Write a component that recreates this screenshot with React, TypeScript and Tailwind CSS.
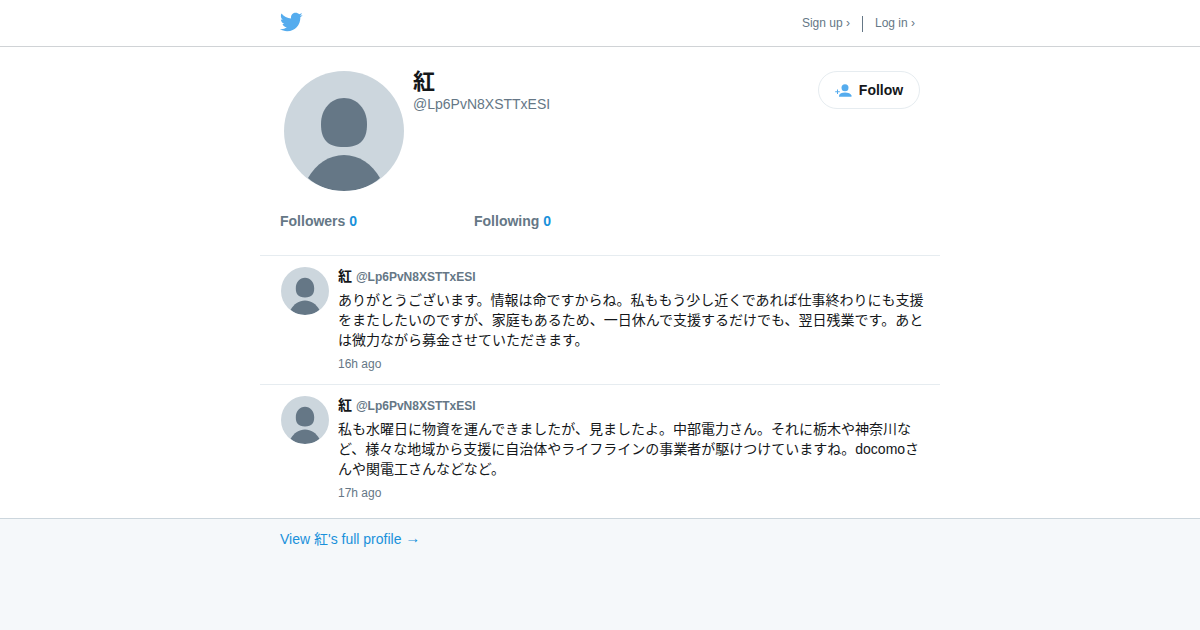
import React from "react";

const birdPath =
  "M23.643 4.937c-.835.37-1.732.62-2.675.733.962-.576 1.7-1.49 2.048-2.578-.9.534-1.897.922-2.958 1.13-.85-.904-2.06-1.47-3.4-1.47-2.572 0-4.658 2.086-4.658 4.66 0 .364.042.718.12 1.06-3.873-.195-7.304-2.05-9.602-4.868-.4.69-.63 1.49-.63 2.342 0 1.616.823 3.043 2.072 3.878-.764-.025-1.482-.234-2.11-.583v.06c0 2.257 1.605 4.14 3.737 4.568-.392.106-.803.162-1.227.162-.3 0-.593-.028-.877-.082.593 1.85 2.313 3.198 4.352 3.234-1.595 1.25-3.604 1.995-5.786 1.995-.376 0-.747-.022-1.112-.065 2.062 1.323 4.51 2.093 7.14 2.093 8.57 0 13.255-7.098 13.255-13.254 0-.2-.005-.402-.014-.602.91-.658 1.7-1.477 2.323-2.41z";

function Avatar({ className }: { className: string }) {
  return (
    <svg viewBox="0 0 120 120" className={className}>
      <clipPath id="avatar-clip">
        <circle cx="60" cy="60" r="60" />
      </clipPath>
      <g clipPath="url(#avatar-clip)">
        <rect width="120" height="120" fill="#ccd6dd" />
        <path
          d="M60 27c-13 0-23 11-23 26 0 8 1.500 13 5 17 3.500 4 9.500 6 18 6s14.500-2 18-6c3.500-4 5-9 5-17 0-15-10-26-23-26z"
          fill="#657786"
        />
        <path
          d="M24 107c8-14 21-23 36-23s28 9 36 23c-9 8.500-22 13-36 13s-27-4.500-36-13z"
          fill="#657786"
        />
      </g>
    </svg>
  );
}

const tweets = [
  {
    text: "ありがとうございます。情報は命ですからね。私ももう少し近くであれば仕事終わりにも支援をまたしたいのですが、家庭もあるため、一日休んで支援するだけでも、翌日残業です。あとは微力ながら募金させていただきます。",
    time: "16h ago",
  },
  {
    text: "私も水曜日に物資を運んできましたが、見ましたよ。中部電力さん。それに栃木や神奈川など、様々な地域から支援に自治体やライフラインの事業者が駆けつけていますね。docomoさんや関電工さんなどなど。",
    time: "17h ago",
  },
];

function App() {
  return (
    <div className="min-h-[630px] flex flex-col bg-white font-['Liberation_Sans','Noto_Sans_CJK_JP',sans-serif] text-[#14171a]">
      <header className="h-[47px] border-b border-[#d0d3d6]">
        <div className="w-[680px] mx-auto px-5 flex justify-between">
          <svg viewBox="0 0 24 24" className="w-6 h-6 mt-[10px] -ml-px fill-[#55acee]">
            <path d={birdPath} />
          </svg>
          <nav className="flex items-center h-[46px] pr-[5px] text-xs text-[#657786]">
            <span>Sign up ›</span>
            <span className="w-px h-4 bg-[#657786] mx-3 mt-[1px]"></span>
            <span>Log in ›</span>
          </nav>
        </div>
      </header>

      <main className="w-[680px] mx-auto">
        <section className="px-5 pt-6 h-[209px] border-b border-[#e6ecf0]">
          <div className="flex items-start">
            <Avatar className="w-[120px] h-[120px] ml-1 shrink-0" />
            <div className="ml-[9px] flex-1 -mt-[2px]">
              <h1 className="text-[22px] leading-[26px] font-bold">紅</h1>
              <p className="text-sm leading-[16px] mt-[1px] text-[#657786]">@Lp6PvN8XSTTxESI</p>
            </div>
            <button className="h-[38px] w-[102px] flex items-center justify-center gap-[7px] rounded-full border border-[#e6ecf0] text-sm font-bold">
              <svg viewBox="0 0 17 13" className="w-[17px] h-[13px] fill-[#55acee]">
                <circle cx="10" cy="3.800" r="3.500" />
                <path d="M4 11.500c.4-2 2.800-3 6-3s5.800 1 6.500 3v1.300H4z" />
                <path d="M2 5.500h1v1.800h1.800v1H3v1.800H2V8.300H.2v-1H2z" />
              </svg>
              Follow
            </button>
          </div>
          <div className="flex mt-[21px] text-sm leading-[18px] font-bold text-[#657786]">
            <span className="w-[194px]">
              Followers <span className="text-[#1a91da]">0</span>
            </span>
            <span>
              Following <span className="text-[#1a91da]">0</span>
            </span>
          </div>
        </section>

        {tweets.map((tweet, i) => (
          <article
            key={tweet.time}
            className={`flex pl-[21px] pr-[13px] pt-[11px] ${i === 0 ? "h-[129px] border-b border-[#e6ecf0]" : "h-[133px]"}`}
          >
            <Avatar className="w-12 h-12 shrink-0" />
            <div className="ml-[9px] min-w-0 -mt-px">
              <div className="text-sm leading-5 font-bold">
                紅 <span className="text-xs text-[#657786]">@Lp6PvN8XSTTxESI</span>
              </div>
              <p className="text-sm leading-5 mt-1">{tweet.text}</p>
              <div className="text-xs leading-4 mt-[6px] text-[#657786]">{tweet.time}</div>
            </div>
          </article>
        ))}
      </main>

      <footer className="flex-1 bg-[#f5f8fa] border-t border-[#ccd6dd]">
        <div className="w-[680px] mx-auto px-5 pt-[11px] text-sm leading-[18px] text-[#1a91da]">
          View 紅's full profile <span className="inline-block -translate-y-px text-[15px] leading-none">→</span>
        </div>
      </footer>
    </div>
  );
}

export default App;
